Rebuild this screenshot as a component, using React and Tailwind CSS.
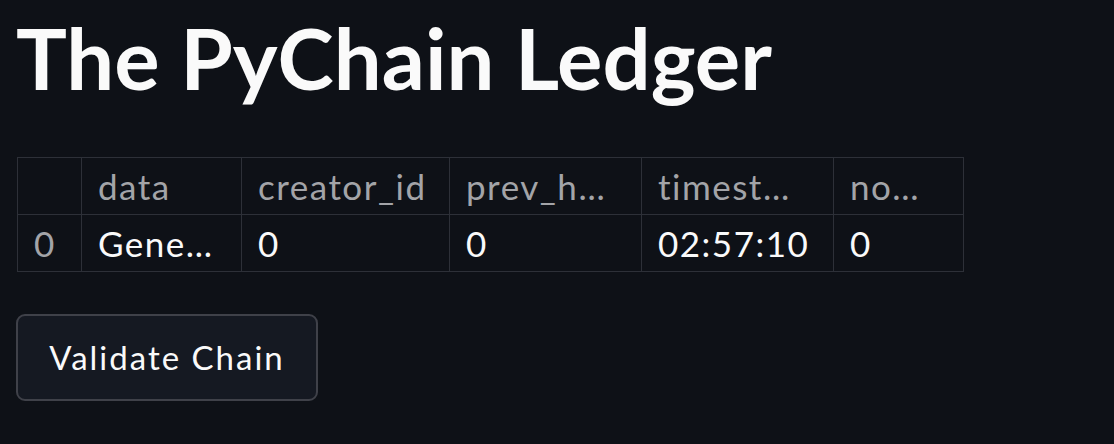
export default function App() {
  const cols = [
    { w: 64, h: "", v: "0", idx: true },
    { w: 160, h: "data", v: "Gene…" },
    { w: 208, h: "creator_id", v: "0" },
    { w: 192, h: "prev_h…", v: "0" },
    { w: 192, h: "timest…", v: "02:57:10" },
    { w: 130, h: "no…", v: "0" },
  ];
  return (
    <div className="min-h-[444px] w-[1114px] bg-[#0e1117] text-[#fafafa]" style={{ fontFamily: "Lato, 'Noto Sans', sans-serif" }}>
      <div className="pl-[16px] pt-[2px] h-[157px]">
        <h1 className="text-[85px] font-bold leading-[110px]">The PyChain Ledger</h1>
      </div>
      <div className="ml-[17px] flex">
        <div className="flex border-t border-l border-[#2d3038]">
          {cols.map((c, i) => (
            <div key={i} className="flex flex-col" style={{ width: c.w }}>
              <div className="h-[57px] border-r border-b border-[#2d3038] pl-[16px] flex items-center text-[35px] tracking-[1.5px] text-[#a3a4a8] whitespace-nowrap overflow-hidden">
                {c.h}
              </div>
              <div className={`h-[57px] border-r border-b border-[#2d3038] pl-[16px] flex items-center text-[35px] tracking-[1.5px] whitespace-nowrap overflow-hidden ${c.idx ? "text-[#a3a4a8]" : "text-[#fafafa]"}`}>
                {c.v}
              </div>
            </div>
          ))}
        </div>
      </div>
      <div className="ml-[16px] mt-[42px]">
        <button className="w-[302px] h-[87px] rounded-[9px] border-2 border-[#3f4149] bg-[#151922] text-[33px] tracking-[2px] text-[#fafafa]">
          Validate Chain
        </button>
      </div>
    </div>
  );
}
